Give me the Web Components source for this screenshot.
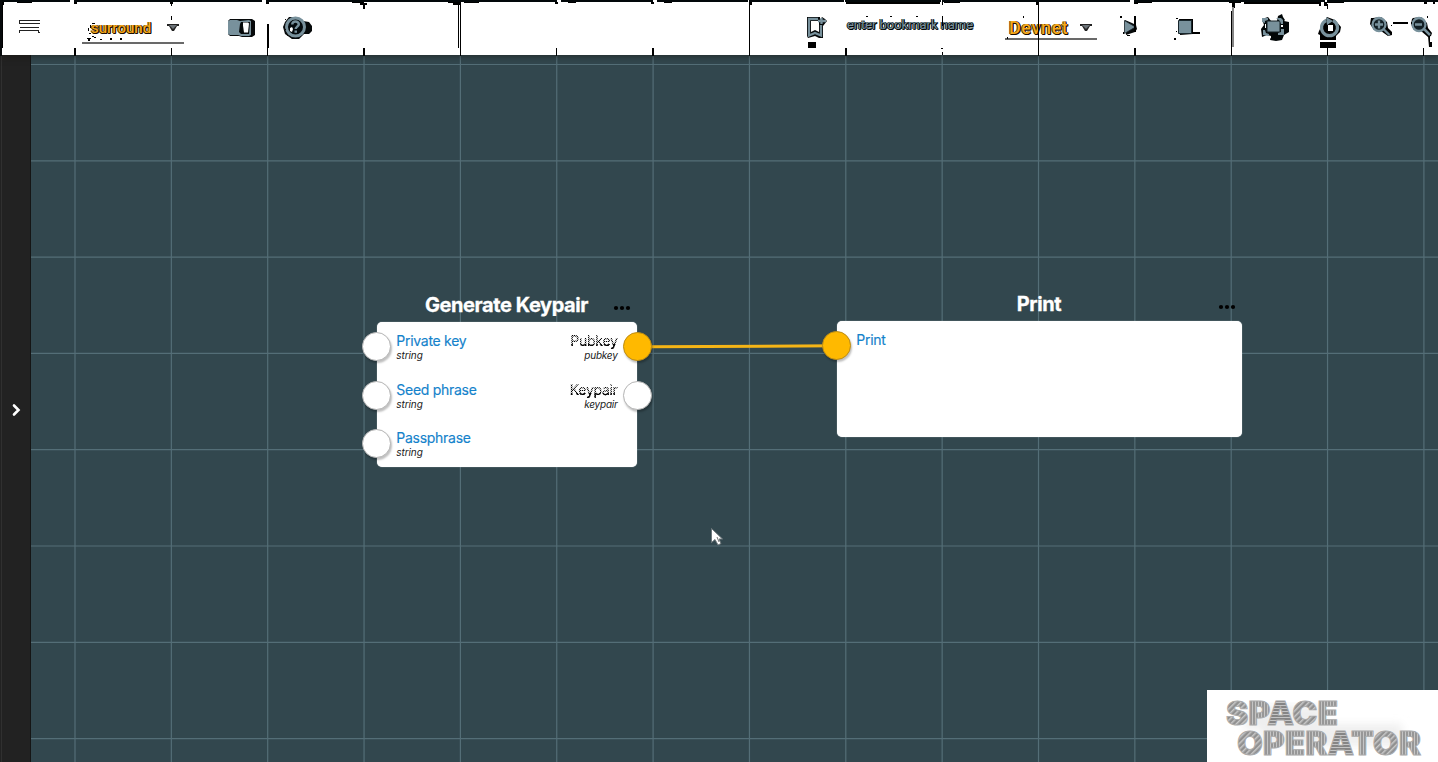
<!DOCTYPE html>
<html lang="en"><head><meta charset="utf-8"><title>Space Operator</title>
<style>html,body{margin:0;height:100%;overflow:hidden;background:#32474e;font-family:Inter,"Liberation Sans",sans-serif}</style></head>
<body><space-app></space-app>
<script>
const define=(name,html,init)=>customElements.define(name,class extends HTMLElement{
  connectedCallback(){if(this.shadowRoot)return;const r=this.attachShadow({mode:'open'});r.innerHTML=typeof html==='function'?html(this):html;if(init)init(this,r)}
});

/* Toolbar icons share the toolbar's coordinate space; each shows its own slice. */
const icons={
menu:[17,24,`<g fill="#222"><path d="M19 20h21v1H19zM19 23h21v1H20zM20 27h19v1H20zM19 30h20v1H19zM19 20h1v4h-1zM19 30h1v3h-1zM38 30h1v2h-1zM38 32h2v1h-2zM16 29h1v1h-1z"/></g>`],
panel:[227,29,`<path d="M231 19h21l3 2v14l-3 2h-10l-3-1h-9l-2-2V21l2-2z" fill="#06090a"/><path d="M230 20h7l3 1 9-1 2 1v14l-2 1h-8l-3-1h-8l-2-1V21z" fill="#78919c"/><path d="M241 22h9l-1 12h-8l-2-2 1-8z" fill="#06090a"/><path d="M243 22.500h5l1 1-1 9h-4l-1-7z" fill="#fff"/>`],
help:[283,30,`<path d="M289 17h7l7 4 6 1 3 4v5l-3 3h-5l-5 5h-7l-7-5-2-7 2-5z" fill="#06090a"/><circle cx="295.500" cy="27" r="9" fill="#050b0e" stroke="#78919c" stroke-width="3"/><path d="M292.300 24.500C292 20.500 298.800 20.500 298.800 24.300C298.800 26.500 295.700 26.800 295.700 29" fill="none" stroke="#78919c" stroke-width="2.500"/><path d="M294.500 30.500h2.500v2.300h-2.500z" fill="#78919c"/><path d="M290 28l2-1 1 2-1 3-2-1z" fill="#fff"/><path d="M285 19h1v1h-1zM284 24h1v2h-1zM284 29h2v1h-2zM287 35h2v1h-2z" fill="#111"/>`],
bookmark:[804,24,`<path d="M807 17h13v3l2-3 3 2 2 2-4 5v12h-4l-4-2-7 2-1-2z" fill="#06090a"/><path d="M811 21h8v11l-4-2-4 2z" fill="#fff"/><path d="M818 19h-9v16.500l6-2.500 6 2.500V25" fill="none" stroke="#78919c" stroke-width="2.300"/><path d="M818 21h8M821.500 18v6" stroke="#78919c" stroke-width="2.300"/><path d="M808 42h8v6h-8z"/>`],
play:[1119,20,`<path d="M1125 20l7 3 4 2 1 4-2 3-9 3z" fill="#06090a"/><path d="M1124.500 20.500v13l11-6.500z" fill="#78919c" stroke="#172126" stroke-width=".8"/><path d="M1120 16h2v2h-2zM1127 35h3v1h-3zM1123 32h1v2h-1z"/>`],
stop:[1173,28,`<path d="M1179 19h14v13h7v2h-7l-13 1z"/><path d="M1178.500 20.500h13v13h-13z" fill="#78919c" stroke="#18262c"/><path d="M1176 18h2v1h-2zM1174 38h2v2h-2zM1176 31h1v1h-1z"/>`],
fit:[1261,30,`<path d="M1262 19l6-2 3 4 6 0 1-5 4-2 1 3 2 3-1 1 5 1v10l-5 3-2 5-6 1-6-1 1-4-4-1-5 2-1-8 3-4z" fill="#020708"/><path d="M1267 21h13v11h-13z" fill="#78919c" stroke="#142025"/><path d="M1262 18h6v2l-3 1v2l-3-1zM1276 18h5l2 2v4h-2l-1-3zM1263 30h2l1 3 3 1v2l-6-1zM1278 33l3-1v-3h3v6h-6z" fill="#78919c"/><path d="M1265 24h1v4h-1zM1281 25h2v2h-2zM1269 36h2v2h-2z" fill="#fff"/>`],
refresh:[1317,25,`<path d="M1327 17l8 3 6 7-1 5-4 4v4h-16v-5l-2-1 1-3 2-4z"/><path d="M1333 20.500a8 8 0 1 1-7 0" fill="none" stroke="#78919c" stroke-width="3.200"/><path d="M1326 17l7 4-6 4z" fill="#78919c"/><path d="M1328 25h5v6h-5zM1318 25h2v3h-2z" fill="#fff"/><path d="M1320 42h16v6h-16z"/>`],
plus:[1369,25,`<path d="M1373 18l8-1 6 5 1 6 4 4v3l-4 1-7-5-7-1-4-6 1-6z"/><circle cx="1379" cy="24.500" r="6.500" fill="#142025" stroke="#78919c" stroke-width="2.300"/><path d="M1375 24.500h8M1379 20.500v8M1383.500 29l6 6" stroke="#78919c" stroke-width="2.300"/>`],
minus:[1408,28,`<path d="M1413 18l8-1 6 6 1 5 4 5-1 3-3 1-7-6-7-1-3-6 1-5z"/><circle cx="1419" cy="24.500" r="6.500" fill="#142025" stroke="#78919c" stroke-width="2.300"/><path d="M1415 24.500h7M1424 29l6 6" stroke="#78919c" stroke-width="2.500"/><path d="M1428 36h2v6h2v5h-3zM1427 16h1v2h-1zM1411 22h1v2h-1z"/>`]
};
define('bar-icon',h=>{const [x,w,g]=icons[h.getAttribute('name')];return `<style>:host{display:block;flex:none;width:${w}px;height:55px}svg{display:block}</style><svg width="${w}" height="55" viewBox="${x} 0 ${w} 55">${g}</svg>`});
define('bar-select',`<style>:host{display:block;flex:none;height:55px;box-sizing:border-box}
.f{display:flex;align-items:center;justify-content:space-between;box-sizing:border-box;height:100%;border-bottom:2px solid #696969;font:500 var(--fs,15px)/20px Roboto,sans-serif;color:#f6a91c;padding:0 4px 0 var(--pad,9px)}
slot{display:block;text-shadow:1px 1px 0 #190c00,1px 0 0 #211000,0 1px 0 #211000,-1px 0 0 #6f470b}
svg{display:block}</style><div class="f"><span style="letter-spacing:var(--ls,0)"><slot></slot></span><svg width="14" height="8"><path d="M1 0h12v2h-2L8 7H6L3 2H1z" fill="#222"/><path d="M3 1h8L7 5z" fill="#6d7479"/></svg></div>`);
define('bar-input',`<style>:host{display:block;flex:none;width:126px;font:400 13px/20px Roboto,sans-serif;white-space:nowrap;color:#78919c;letter-spacing:-.04px;text-shadow:1px 1px 0 #020809,0 1px 0 #020809,-1px 0 0 #101b20,1px 0 0 #020809}</style><slot></slot>`);
define('bar-marks',`<style>:host{position:absolute;inset:0;pointer-events:none}svg{display:block}</style><svg width="1438" height="56" shape-rendering="crispEdges">
<path d="M0 0h1438v2H0z" fill="#02080a"/><path d="M0 0h2v56H0z" fill="#06090b"/>
<path d="M70 0h4v2h-4zM262 0h4v2h-4zM557 0h4v2h-4zM653 0h4v2h-4zM748 0h1v2h-1zM844 0h1v3h-1zM941 0h1v3h-1zM1130 0h4v2h-4zM1325 0h2v2h-2z" fill="#fff"/>
<path d="M74 2h3v2h-3zM170 2h3v2h-3zM171 4h1v2h-1zM171 16h1v4h-1zM266 2h3v2h-3zM352 2h12v1h-12zM360 3h7v2h-7zM363 5h2v4h-2zM448 2h13v1h-13zM453 3h8v2h-8zM17 2h15v1H17zM464 2h15v1h-15zM555 2h3v2h-3zM568 2h8v1h-8zM651 2h3v2h-3zM664 2h8v1h-8zM750 2h2v3h-2zM846 2h3v2h-3zM849 2h91v2h-91zM942 2h1v3h-1zM944 2h16v1h-16zM1036 2h3v3h-3zM1134 2h4v2h-4zM1137 2h15v1h-15zM1229 2h12v1h-12zM1232 3h3v5h-3zM1244 2h75v2h-75zM1319 2h2v4h-2zM1324 2h3v4h-3zM1327 2h17v1h-17zM1424 2h3v2h-3zM1433 2h2v2h-2zM2 2h2v3H2z"/>
<path d="M74 48h2v8h-2zM171 48h1v8h-1zM267 24h2v24h-2zM267 48h1v8h-1zM363 48h2v8h-2zM458 4h1v44h-1zM460 2h1v54h-1zM556 48h1v8h-1zM652 48h2v8h-2zM749 2h1v54h-1zM845 48h2v8h-2zM942 16h1v10h-1zM941 48h2v1h-2zM942 52h1v3h-1zM1038 4h1v52h-1zM1134 16h2v16h-2zM1134 48h2v8h-2zM1231 11h1v45h-1zM1327 4h1v5h-1zM1327 48h1v8h-1zM1423 48h1v8h-1zM2 5h1v43H2z"/>
<path d="M1232 7h2v40h-2z" fill="#858585"/><path d="M1393 22h15v2h-15zM1391 25h1v1h-1z"/>
<path d="M92 23h3v1h-3zM90 25h1v3h-1zM88 28h1v3h-1zM89 33h2v1h-2zM92 36h2v1h-2zM87 38h4v1h-4zM88 39h2v2h-2zM94 37h2v1h-2zM100 39h2v1h-2zM110 38h2v2h-2zM120 38h2v2h-2zM866 16h2v1h-2zM890 16h2v1h-2zM916 16h2v1h-2zM1023 16h1v2h-1zM1007 37h1v2h-1z"/>
</svg>`);
define('top-bar',`<style>:host{display:block;position:relative;height:55px;flex:none;background:#fff;z-index:3;box-shadow:0 1px 7px rgba(24,18,14,.6)}
.r{display:flex;height:55px;align-items:flex-start}
.r>*{margin-left:var(--g)}</style><div class="r">
<bar-icon name="menu" style="--g:17px"></bar-icon>
<bar-select style="--g:41px;width:102px;height:44px;--pad:9px;--fs:15px;padding-top:13px">surround</bar-select>
<bar-icon name="panel" style="--g:43px"></bar-icon><bar-icon name="help" style="--g:27px"></bar-icon>
<bar-icon name="bookmark" style="--g:491px"></bar-icon>
<bar-input style="--g:19px;padding-top:15px">enter bookmark name</bar-input>
<bar-select style="--g:32px;width:92px;height:40px;--pad:4px;--fs:18px;--ls:.6px;padding-top:17px">Devnet</bar-select>
<bar-icon name="play" style="--g:22px"></bar-icon><bar-icon name="stop" style="--g:34px"></bar-icon>
<bar-icon name="fit" style="--g:60px"></bar-icon><bar-icon name="refresh" style="--g:26px"></bar-icon>
<bar-icon name="plus" style="--g:27px"></bar-icon><bar-icon name="minus" style="--g:14px"></bar-icon>
</div><bar-marks></bar-marks>`);
define('side-rail',`<style>:host{display:flex;flex:none;width:31px;box-sizing:border-box;border-right:1px solid #151515;background:linear-gradient(90deg,#222 1px,#303030 1px 2px,#222 2px);align-items:center;justify-content:center}svg{display:block}</style><svg width="12" height="14" viewBox="0 0 12 14" style="margin:3px 0 0 2px"><path d="M4 2.500l4.500 4.500L4 11.500" fill="none" stroke="#fff" stroke-width="2.600" stroke-linecap="round"/></svg>`);
define('port-row',h=>{const out=h.hasAttribute('out'),on=h.hasAttribute('on');return `<style>
:host{display:flex;height:48.200px;align-items:flex-start;gap:5px;flex-direction:${out?'row-reverse':'row'};margin-${out?'right':'left'}:${out?'-14.600px':'-14.700px'}}
i{flex:none;box-sizing:border-box;width:29px;height:29px;border-radius:50%;border:1px solid ${on?'#bd8c14':'#b5b5b5'};background:${on?'#ffb900':'#fff'};box-shadow:1px 2px 2px rgba(0,0,0,.25)}
div{text-align:${out?'right':'left'};margin-top:1px}
b{display:block;font:400 14px/16px Inter,sans-serif;white-space:nowrap;color:#1482cb;letter-spacing:-.28px;-webkit-text-stroke:.15px #1482cb}
em{display:block;font:italic 10px/12px Inter,sans-serif;letter-spacing:${out?'-.22px':'-.1px'};color:#202020}
${out?'b{color:transparent;-webkit-text-stroke:.1px transparent;background:linear-gradient(transparent 66%,#000 66%),repeating-conic-gradient(#0000 0 25%,#000 0 50%) 0 0/2px 2px,linear-gradient(#0003,#0003);-webkit-background-clip:text;background-clip:text}':''}
</style><i></i><div><b><slot></slot></b><em>${h.getAttribute('type')||''}</em></div>`});
define('flow-node',h=>`<style>:host{position:absolute;display:block}
header{display:grid;grid-template-columns:1fr auto 1fr;align-items:center;height:36px;color:#fff;font-weight:700;font-size:20px;line-height:24px;letter-spacing:-.42px;-webkit-text-stroke:.3px #fff}
header span{padding-top:2px;margin-right:1px}
header svg{justify-self:end;margin:7px 6px 0 0}
section{box-sizing:border-box;height:var(--h);background:#fff;border-radius:5px;display:flex;justify-content:space-between;padding-top:10px;box-shadow:0 0 1px #d3dadd}
</style><header><span></span><span>${h.getAttribute('label')}</span><svg width="18" height="6" stroke="none"><g><circle cx="3" cy="3" r="2.100"/><circle cx="9" cy="3" r="2.100"/><circle cx="15" cy="3" r="2.100"/></g></svg></header><section><div><slot></slot></div><div><slot name="out"></slot></div></section>`);
define('brand-card',`<style>:host{position:absolute;right:0;bottom:0;width:231px;height:72px;background:#fff}svg{display:block}text{font:900 33px Inter,sans-serif}</style><svg width="231" height="72"><defs>
<pattern id="s" width="60" height="3" patternUnits="userSpaceOnUse"><path d="M0 0h60v3H0z" fill="#858585"/><path d="M0 0h60v1H0z" fill="#c5c5c5"/></pattern>
<pattern id="v" width="3" height="60" patternUnits="userSpaceOnUse"><path d="M0 0h3v60H0z" fill="#979797"/><path d="M0 0h1v60H0z" fill="#c5c5c5"/></pattern>
<pattern id="r" width="4" height="4" patternUnits="userSpaceOnUse" patternTransform="rotate(45)"><path d="M0 0h4v4H0z" fill="#909090"/><path d="M0 0h1.500v4H0z" fill="#c9c9c9"/></pattern><filter id="b"><feGaussianBlur stdDeviation="4"/></filter></defs>
<path d="M45 16h70v18h80v22H55V40H35z" fill="#efefef" filter="url(#b)"/>
<text x="19" y="35" textLength="112" lengthAdjust="spacingAndGlyphs" stroke="#aaa" stroke-width=".9"><tspan fill="url(#r)">S</tspan><tspan fill="url(#v)">P</tspan><tspan fill="url(#s)">A</tspan><tspan fill="url(#r)">C</tspan><tspan fill="url(#v)">E</tspan></text>
<text x="30" y="65" textLength="184" lengthAdjust="spacingAndGlyphs" stroke="#aaa" stroke-width=".9"><tspan fill="url(#r)">O</tspan><tspan fill="url(#v)">PER</tspan><tspan fill="url(#s)">A</tspan><tspan fill="url(#v)">T</tspan><tspan fill="url(#r)">O</tspan><tspan fill="url(#v)">R</tspan></text></svg>`);
define('flow-canvas',`<style>:host{display:block;position:relative;flex:1;overflow:hidden;background:#32474e}.g{position:absolute;inset:0}</style>
<svg class="g" width="1407" height="707" viewBox="31 55 1407 707"><g id="lines" stroke="#546e77" stroke-width="1.200"></g><path d="M650 346.800L838 345.700" stroke="#f5b516" stroke-width="3"/></svg>
<flow-node label="Generate Keypair" style="left:346px;top:231.400px;width:260px;--h:144.600px"><port-row type="string">Private key</port-row><port-row type="string">Seed phrase</port-row><port-row type="string">Passphrase</port-row><port-row slot="out" out on type="pubkey">Pubkey</port-row><port-row slot="out" out type="keypair">Keypair</port-row></flow-node>
<flow-node label="Print" style="left:806px;top:230.400px;width:405px;--h:115.600px"><port-row on>Print</port-row></flow-node>
<svg style="position:absolute;left:679px;top:472px" width="15" height="20"><path d="M1.500 1.500v14l3.500-3 3 5.500 3-1.500-2-4.500h3.500z" fill="#fff" stroke="#6d777b"/><path d="M7 10l2 5" stroke="#777"/></svg><brand-card></brand-card>`,(h,r)=>{let s='';for(let i=0;i<15;i++){const x=75+i*96.350;s+=`<path d="M${x} 55V762"/>`}for(let i=0;i<8;i++){const y=64.500+i*96.300;s+=`<path d="M31 ${y}H1438"/>`}r.querySelector('#lines').innerHTML=s});
define('space-app',`<style>:host{display:flex;flex-direction:column;height:100vh}.m{display:flex;flex:1;min-height:0}</style><top-bar></top-bar><div class="m"><side-rail></side-rail><flow-canvas></flow-canvas></div>`);
</script></body></html>
